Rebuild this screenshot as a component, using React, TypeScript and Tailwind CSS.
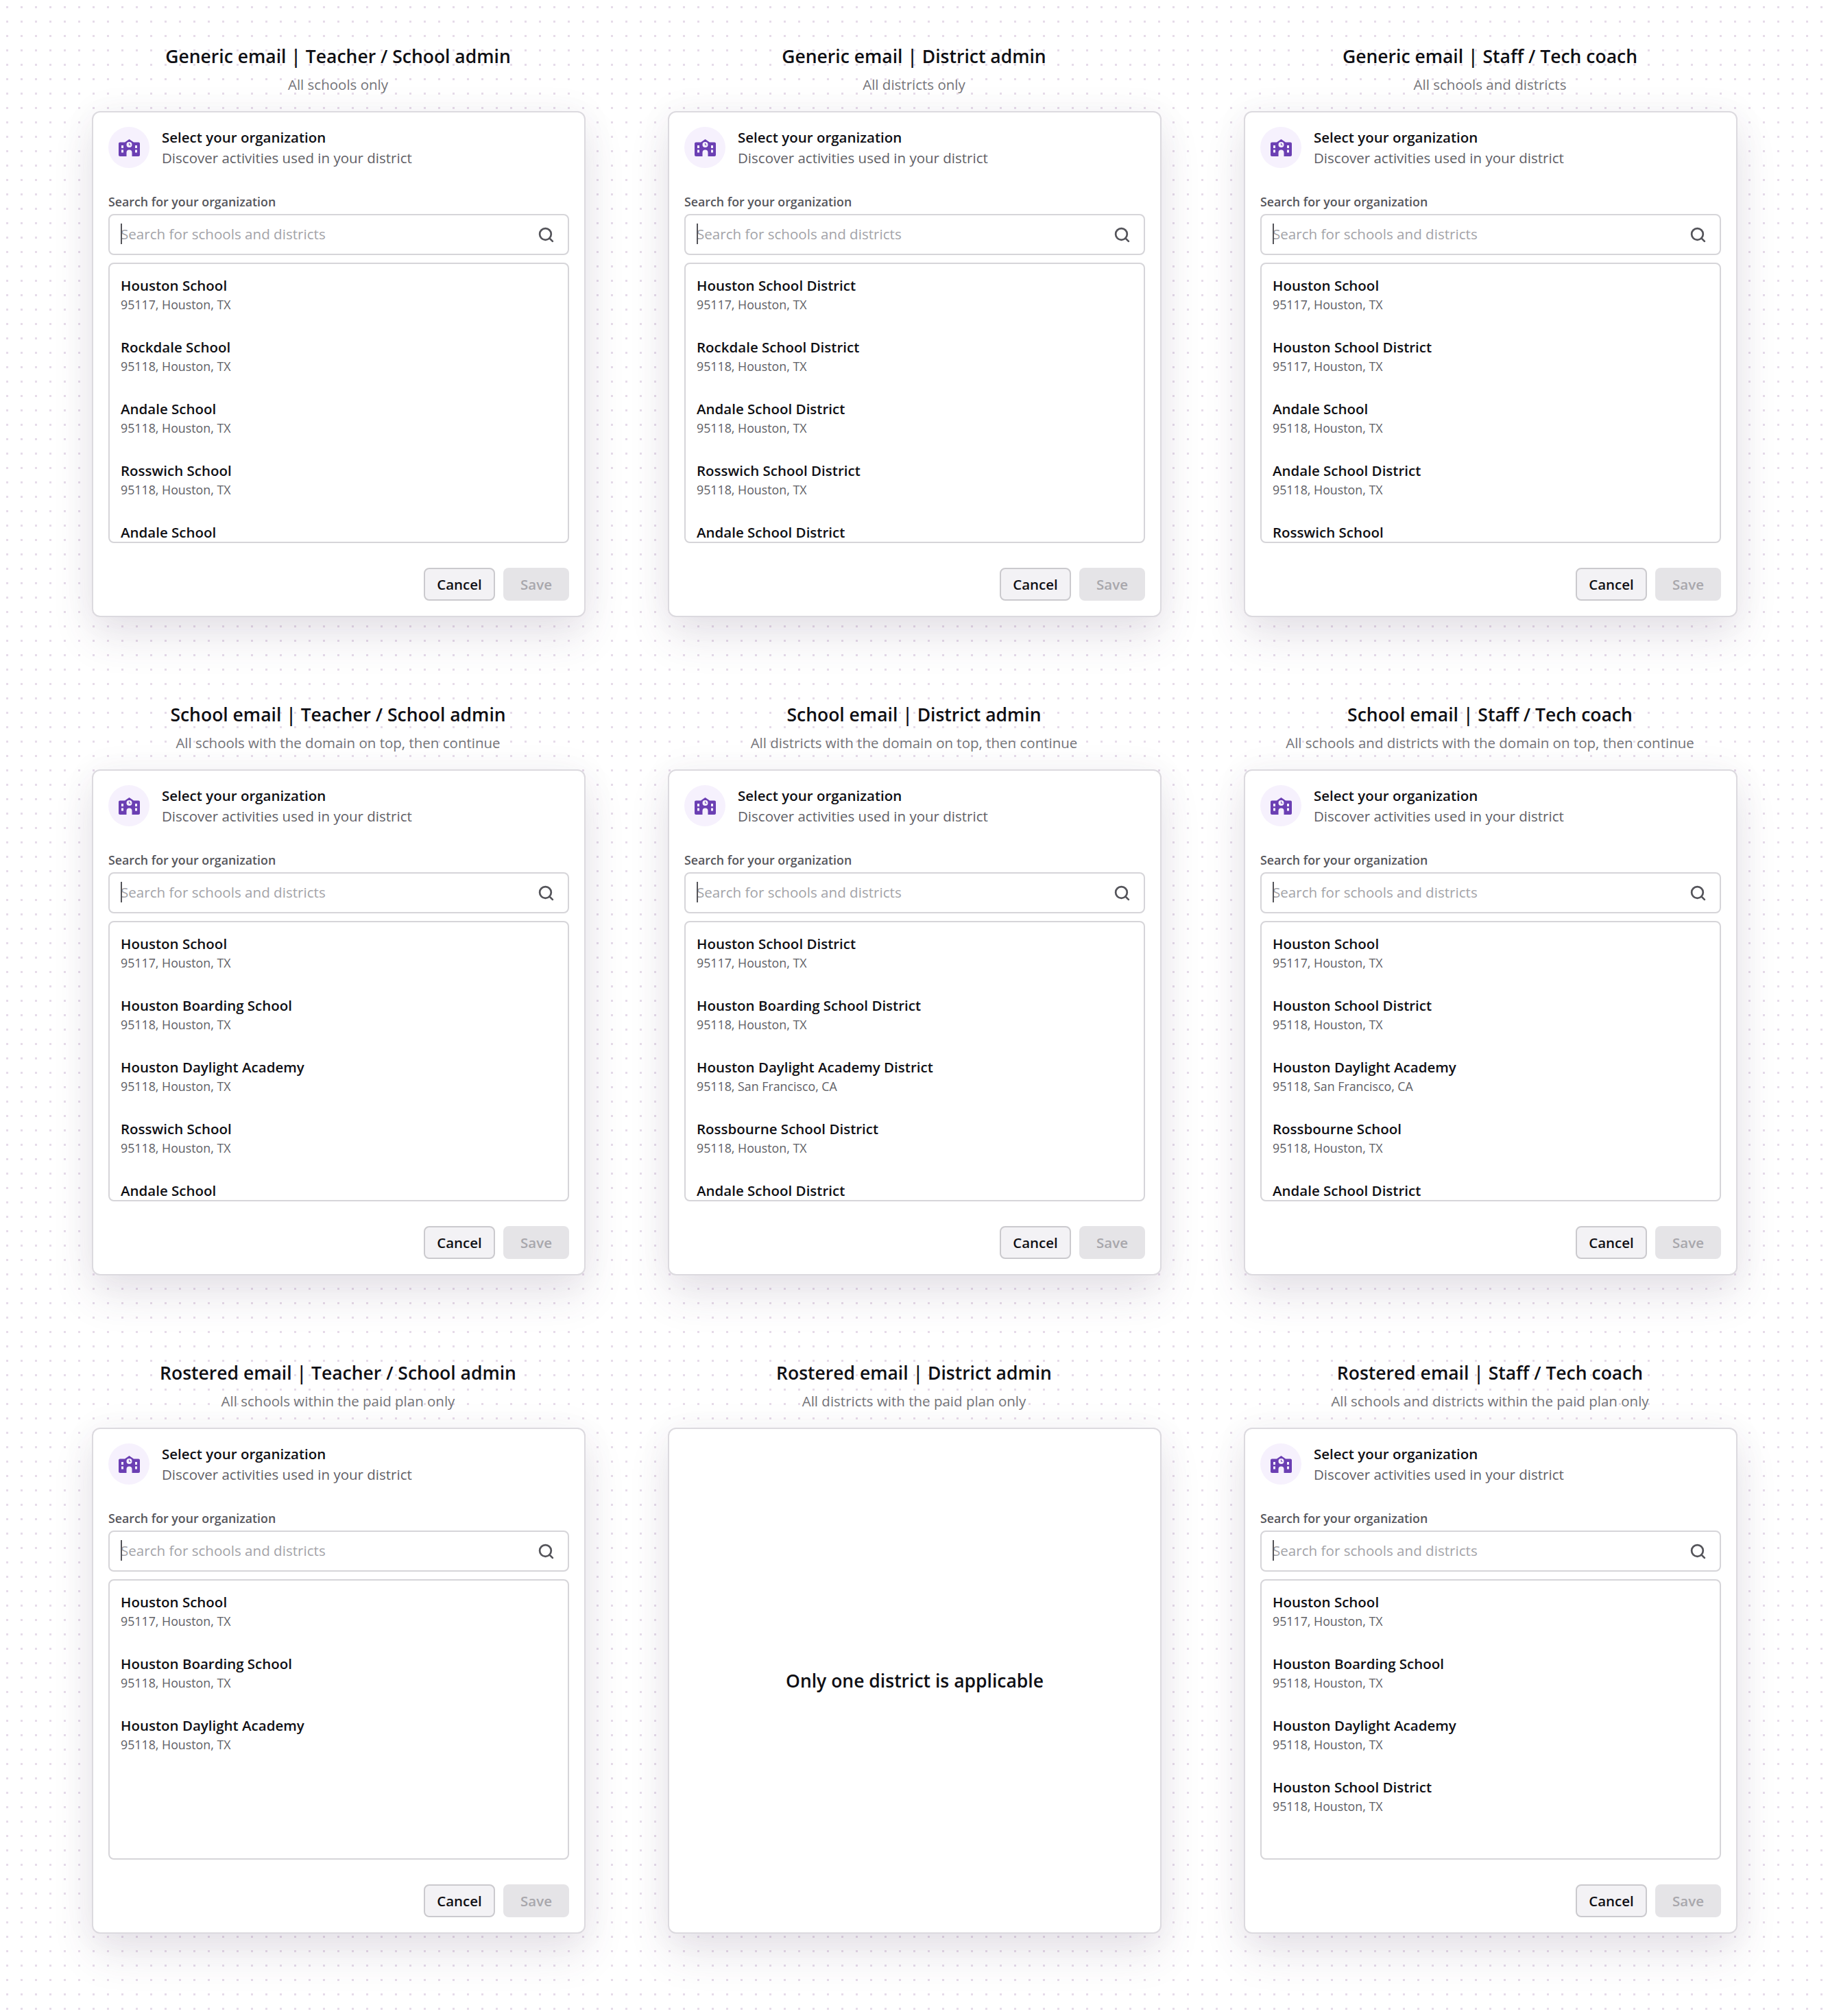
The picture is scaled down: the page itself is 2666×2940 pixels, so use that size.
import React from "react";
import { Search } from "lucide-react";

type Item = [string, string];
const H: Item = ["Houston School", "95117, Houston, TX"];
const s18 = "95118, Houston, TX";
const sf = "95118, San Francisco, CA";

const cards: { title: string; sub: string; items?: Item[] }[] = [
  { title: "Generic email | Teacher / School admin", sub: "All schools only", items: [H, ["Rockdale School", s18], ["Andale School", s18], ["Rosswich School", s18], ["Andale School", s18]] },
  { title: "Generic email | District admin", sub: "All districts only", items: [["Houston School District", "95117, Houston, TX"], ["Rockdale School District", s18], ["Andale School District", s18], ["Rosswich School District", s18], ["Andale School District", s18]] },
  { title: "Generic email | Staff / Tech coach", sub: "All schools and districts", items: [H, ["Houston School District", "95117, Houston, TX"], ["Andale School", s18], ["Andale School District", s18], ["Rosswich School", s18]] },
  { title: "School email | Teacher / School admin", sub: "All schools with the domain on top, then continue", items: [H, ["Houston Boarding School", s18], ["Houston Daylight Academy", s18], ["Rosswich School", s18], ["Andale School", s18]] },
  { title: "School email | District admin", sub: "All districts with the domain on top, then continue", items: [["Houston School District", "95117, Houston, TX"], ["Houston Boarding School District", s18], ["Houston Daylight Academy District", sf], ["Rossbourne School District", s18], ["Andale School District", s18]] },
  { title: "School email | Staff / Tech coach", sub: "All schools and districts with the domain on top, then continue", items: [H, ["Houston School District", s18], ["Houston Daylight Academy", sf], ["Rossbourne School", s18], ["Andale School District", s18]] },
  { title: "Rostered email | Teacher / School admin", sub: "All schools within the paid plan only", items: [H, ["Houston Boarding School", s18], ["Houston Daylight Academy", s18]] },
  { title: "Rostered email | District admin", sub: "All districts with the paid plan only" },
  { title: "Rostered email | Staff / Tech coach", sub: "All schools and districts within the paid plan only", items: [H, ["Houston Boarding School", s18], ["Houston Daylight Academy", s18], ["Houston School District", s18]] },
];

function SchoolIcon() {
  return (
    <svg width="31" height="25" viewBox="0 0 31 25" fill="none">
      <path
        fillRule="evenodd"
        fill="#6b3fb3"
        d="M15.500 0l6.500 4.500h7c1.100 0 2 .9 2 2V23c0 1.100-.9 2-2 2H19.500v-5.500a4 4 0 0 0-8 0V25H2c-1.100 0-2-.9-2-2V6.500c0-1.100.9-2 2-2h7L15.500 0zM15.500 4a4 4 0 1 0 0 8 4 4 0 0 0 0-8zM4 9v4h3V9H4zM4 15.500v4h3v-4H4zM24 9v4h3V9h-3zM24 15.500v4h3v-4h-3z"
      />
      <path d="M15.500 5.800v2.500h2" stroke="#6b3fb3" strokeWidth="1" />
    </svg>
  );
}

function Frame({ children }: { children: React.ReactNode }) {
  return (
    <div className="flex h-[738px] w-[720px] flex-col rounded-[12px] border-2 border-[#dcdadf] bg-white px-[22px] pt-[21px] pb-[20px] shadow-[0_30px_60px_rgba(70,50,90,0.12),0_0_50px_rgba(70,50,90,0.05)]">
      {children}
    </div>
  );
}

function Card({ items }: { items: Item[] }) {
  return (
    <Frame>
      <div className="flex h-[60px] items-center gap-[18px]">
        <div className="flex h-[60px] w-[60px] shrink-0 items-center justify-center rounded-full bg-[#f6f1fd]">
          <SchoolIcon />
        </div>
        <div className="-mt-[1px]">
          <div className="text-[20.500px] leading-[30px] font-semibold text-[#0f0f14]">Select your organization</div>
          <div className="text-[20.500px] leading-[30px] text-[#606066]">Discover activities used in your district</div>
        </div>
      </div>
      <div className="mt-[35px] text-[17.800px] leading-[28px] font-semibold text-[#56565c]">Search for your organization</div>
      <div className="mt-[4px] flex h-[60px] items-center rounded-[8px] border-2 border-[#d6d5d9] pr-[19px] pl-[16px]">
        <div className="relative flex-1 -translate-y-[1px] text-[20.600px] leading-[30px] text-[#a3a3a8]">
          <span className="absolute top-0 left-0 h-[30px] w-[2px] bg-[#55555a]" />
          Search for schools and districts
        </div>
        <Search size={25} strokeWidth={2.6} color="#54545a" />
      </div>
      <div className="mt-[11px] h-[409px] overflow-hidden rounded-[8px] border-2 border-[#d6d5d9] px-[16px] pt-[16px]">
        {items.map(([n, z], i) => (
          <div key={i} className="h-[90px]">
            <div className="text-[20.500px] leading-[30px] font-semibold text-[#0f0f14]">{n}</div>
            <div className="pt-[1px] text-[17.800px] leading-[24px] text-[#606066]">{z}</div>
          </div>
        ))}
      </div>
      <div className="mt-[36px] flex justify-end gap-[12px]">
        <div className="flex h-[48px] w-[104px] items-center justify-center rounded-[8px] border-2 border-[#cbcace] bg-[#f3f2f5] text-[20.500px] font-semibold text-[#0f0f14]">Cancel</div>
        <div className="flex h-[48px] w-[96px] items-center justify-center rounded-[8px] bg-[#e5e4e7] text-[20.500px] font-semibold text-[#a8a7ac]">Save</div>
      </div>
    </Frame>
  );
}

export default function App() {
  return (
    <div className="grid h-[2940px] w-[2666px] grid-cols-[720px_720px_720px] content-start gap-x-[120px] gap-y-[122px] bg-white bg-[radial-gradient(#e6dbe9_1.6px,transparent_2px)] bg-[size:21px_21px] px-[134px] pt-[62px] font-['Open_Sans',sans-serif]">
      {cards.map((c) => (
        <div key={c.title} className="flex flex-col items-center">
          <div className="-translate-x-[1px] text-[26.500px] leading-[40px] font-semibold text-[#0f0f14]">{c.title}</div>
          <div className="mt-[6px] mb-[24px] -translate-x-[1px] text-[20.500px] leading-[30px] text-[#737378]">{c.sub}</div>
          {c.items ? (
            <Card items={c.items} />
          ) : (
            <Frame>
              <div className="flex flex-1 items-center justify-center text-[26.500px] font-semibold text-[#0f0f14]">
                Only one district is applicable
              </div>
            </Frame>
          )}
        </div>
      ))}
    </div>
  );
}
